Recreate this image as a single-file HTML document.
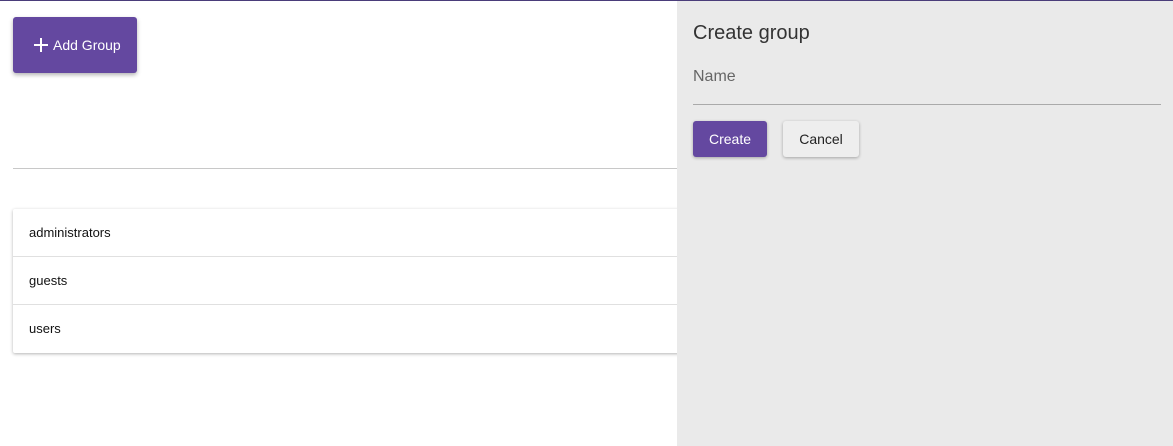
<!DOCTYPE html>
<html><head><style>
*{box-sizing:border-box;margin:0;padding:0}
body{width:1173px;height:446px;overflow:hidden;background:#fff;font-family:"Liberation Sans",sans-serif;position:relative}
.top{position:absolute;left:0;top:0;width:1173px;height:1px;background:#4a3d7a}
.add{position:absolute;left:13px;top:17px;width:124px;height:56px;background:#6448a0;border-radius:3px;box-shadow:0 2px 4px rgba(0,0,0,.3);color:#fff;font-size:14px;line-height:56px}
.add svg{position:absolute;left:21px;top:21px}
.add span{position:absolute;left:40px;top:0}
.hr{position:absolute;left:13px;top:168px;width:664px;height:1px;background:#c8c8c8}
.list{position:absolute;left:13px;top:209px;width:680px;height:144px;box-shadow:0 1px 3px rgba(0,0,0,.3);border-radius:2px;background:#fff}
.row{height:48px;line-height:48px;padding-left:16px;font-size:13px;color:#111;border-bottom:1px solid #e0e0e0}
.row:last-child{border-bottom:none}
.panel{position:absolute;left:677px;top:1px;width:496px;height:445px;background:#eaeaea}
.title{position:absolute;left:16px;top:21px;font-size:20px;color:#333}
.name{position:absolute;left:16px;top:67px;font-size:16px;color:#666}
.line{position:absolute;left:16px;top:103px;width:468px;height:1px;background:#aaa}
.btn{position:absolute;top:120px;height:36px;line-height:36px;text-align:center;font-size:14px;border-radius:3px;box-shadow:0 1px 3px rgba(0,0,0,.3)}
.c{left:16px;width:74px;background:#6448a0;color:#fff}
.x{left:106px;width:76px;background:#eee;color:#222}
</style></head><body>
<div class="top"></div>
<div class="add"><svg width="14" height="14"><path d="M7 0V14M0 7H14" stroke="#fff" stroke-width="2"/></svg><span>Add Group</span></div>
<div class="hr"></div>
<div class="list"><div class="row">administrators</div><div class="row">guests</div><div class="row">users</div></div>
<div class="panel">
<div class="title">Create group</div>
<div class="name">Name</div>
<div class="line"></div>
<div class="btn c">Create</div>
<div class="btn x">Cancel</div>
</div>
</body></html>
